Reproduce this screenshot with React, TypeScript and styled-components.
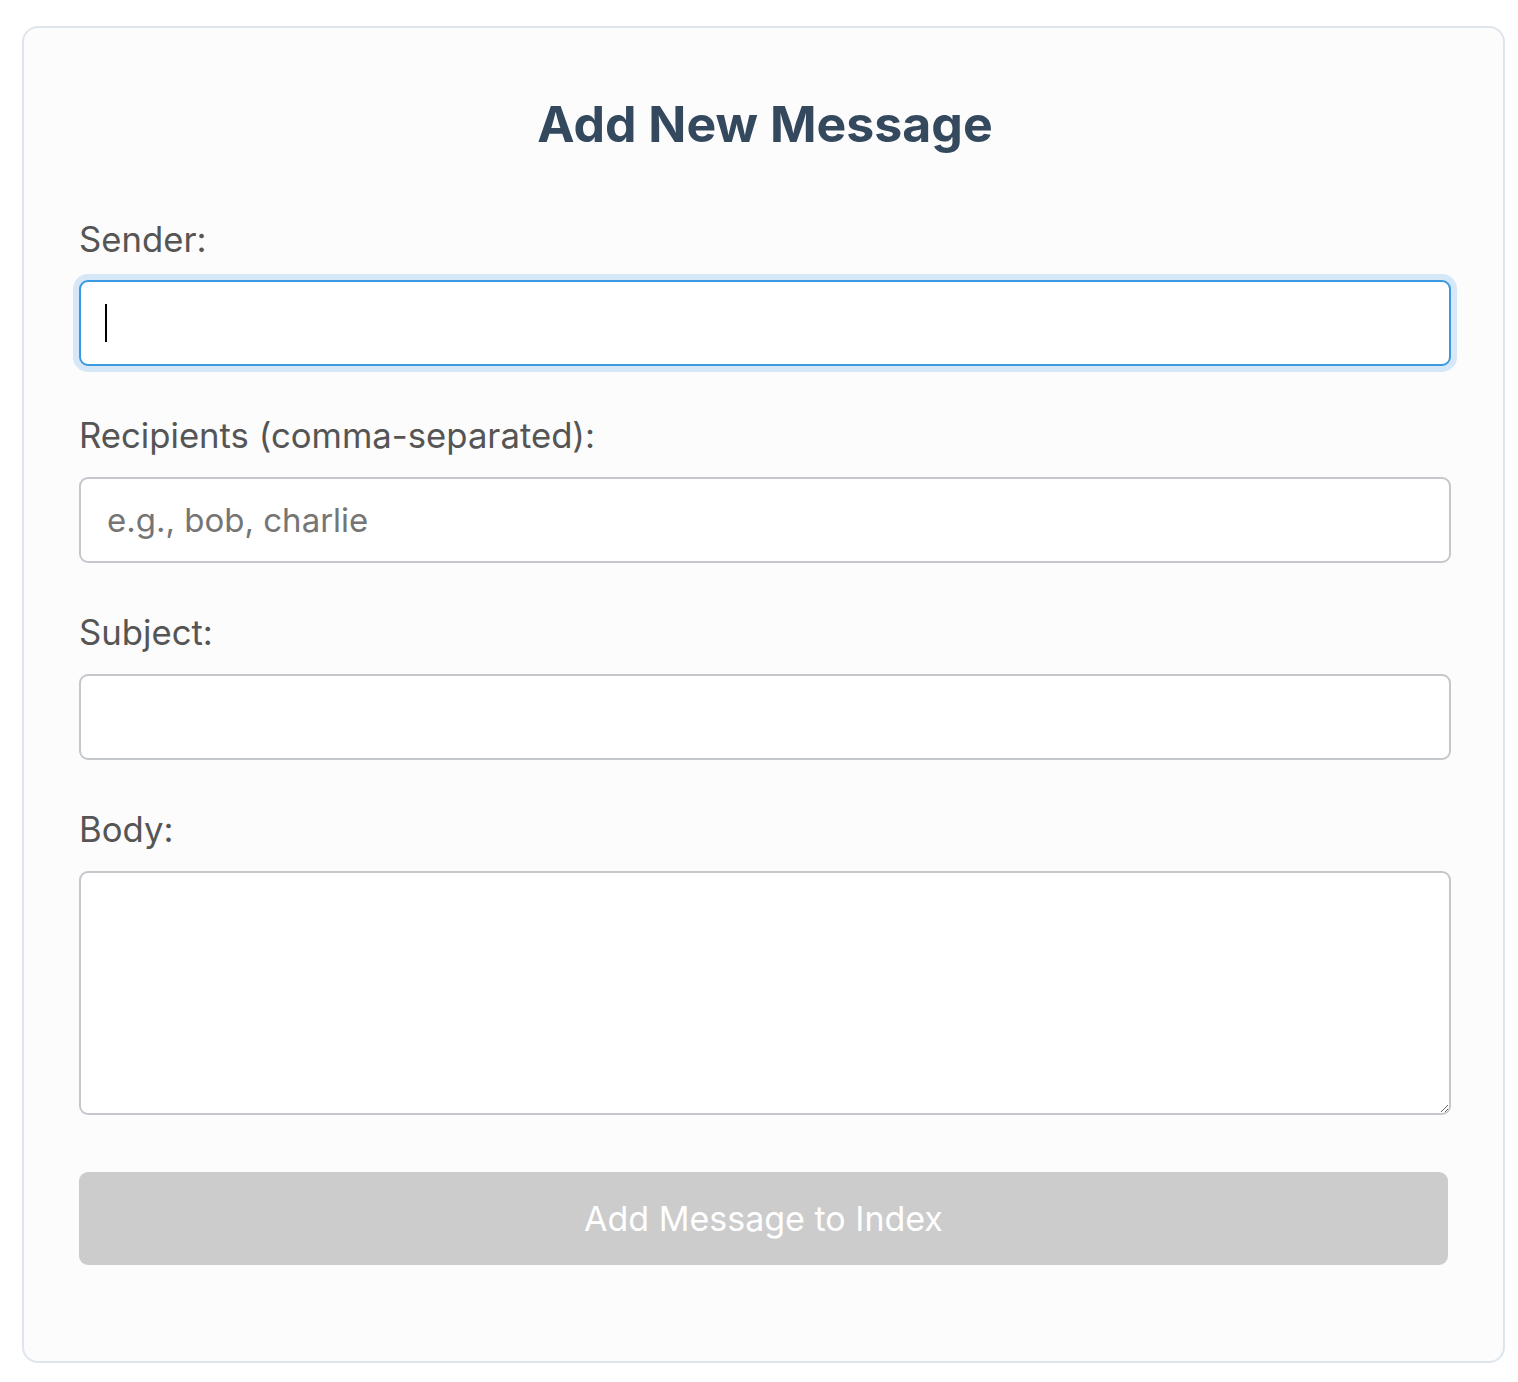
import React from 'react'
import styled, { createGlobalStyle, css } from 'styled-components'

const GlobalStyle = createGlobalStyle`
  html, body {
    margin: 0;
    padding: 0;
    background: #ffffff;
    font-family: Inter, "Noto Sans", "Liberation Sans", sans-serif;
  }
  * { box-sizing: border-box; }
`

const Card = styled.div`
  margin: 26px 13px 0 22px;
  padding: 66px 52px 96px 55px;
  background: #fcfcfc;
  border: 2px solid #dfe5ec;
  border-radius: 16px;
  display: flex;
  flex-direction: column;
`

const Title = styled.h2`
  margin: 0 0 63px;
  text-align: center;
  font-size: 50px;
  line-height: 1.21;
  font-weight: 700;
  color: #34495e;
`

const Field = styled.div`
  display: flex;
  flex-direction: column;
  margin-bottom: 48px;
`

const Label = styled.label`
  font-size: 34.7px;
  line-height: 1.21;
  color: #555555;
  margin-bottom: 21px;
`

const fieldBox = css<{ $focused?: boolean }>`
  width: 100%;
  border: 2px solid #c4c7cb;
  border-radius: 9px;
  background: #ffffff;
  padding: 0 26px;
  font-family: inherit;
  font-size: 33px;
  color: #222;
  outline: none;

  &::placeholder {
    color: #757575;
  }

  ${p => p.$focused && css`
    border-color: #3a99e0;
    box-shadow: 0 0 0 6px #d6e7f8;
    caret-color: transparent;
  `}
`

// holds the focused input so the text cursor can be drawn over it
const CaretWrap = styled.div`
  position: relative;

  &::after {
    content: '';
    position: absolute;
    left: 26px;
    top: 24px;
    width: 2px;
    height: 38px;
    background: #000;
    pointer-events: none;
  }
`

const Input = styled.input<{ $focused?: boolean }>`
  ${fieldBox};
  display: block;
  height: 86px;
`

const TextArea = styled.textarea<{ $focused?: boolean }>`
  ${fieldBox};
  height: 244px;
  padding: 20px 26px;
  resize: vertical;
  display: block;
`

const SubmitButton = styled.button`
  margin-top: 9px;
  width: calc(100% - 3px);
  height: 93px;
  border: none;
  border-radius: 9px;
  background: #cccccc;
  color: #ffffff;
  font-family: inherit;
  font-size: 34px;
  cursor: not-allowed;
`

export default function App() {
  return (
    <>
      <GlobalStyle />
      <Card>
        <Title>Add New Message</Title>
        <Field>
          <Label htmlFor="sender">Sender:</Label>
          <CaretWrap>
            <Input id="sender" type="text" autoFocus $focused />
          </CaretWrap>
        </Field>
        <Field>
          <Label htmlFor="recipients">Recipients (comma-separated):</Label>
          <Input id="recipients" type="text" placeholder="e.g., bob, charlie" />
        </Field>
        <Field>
          <Label htmlFor="subject">Subject:</Label>
          <Input id="subject" type="text" />
        </Field>
        <Field>
          <Label htmlFor="body">Body:</Label>
          <TextArea id="body" />
        </Field>
        <SubmitButton disabled>Add Message to Index</SubmitButton>
      </Card>
    </>
  )
}
